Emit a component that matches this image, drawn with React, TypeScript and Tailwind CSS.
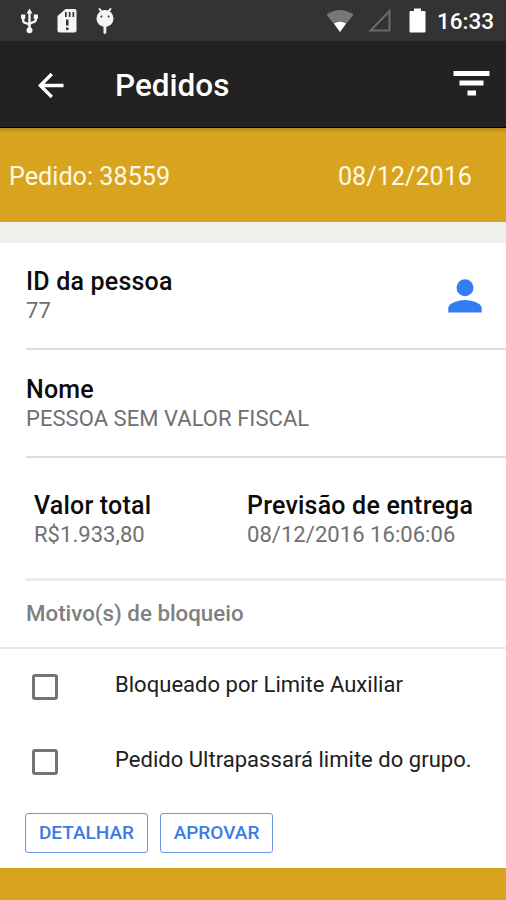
import type { ReactNode } from "react";

function StatusBar() {
  return (
    <div className="flex h-[41px] shrink-0 items-center bg-[#333333] text-white">
      <svg className="ml-5 h-[28px] w-[19px]" viewBox="0 0 19 28" fill="none" stroke="#f5f5f5" strokeWidth="2.4">
        <path d="M9.5 4v18M3.2 10v4c0 2.800 6.3 1.5 6.3 5M15.8 10v3c0 3.200-6.3 1.5-6.3 5" />
        <path d="M9.5 1.5 12.5 6.500h-6zM1 7.500h4.300v4.300H1zM13.700 7.500H18v4.300h-4.300z" fill="#f5f5f5" stroke="none" />
        <circle cx="9.5" cy="23.3" r="3" fill="#f5f5f5" stroke="none" />
      </svg>
      <svg className="ml-[18px] h-[26px] w-[20px]" viewBox="0 0 20 26">
        <path d="M8.500 1H17.500a2 2 0 0 1 2 2V22.500a2 2 0 0 1-2 2H2.500a2 2 0 0 1-2-2V8z" fill="#f5f5f5" />
        <path d="M8 4h1.700v5H8zM11.800 4h1.700v5h-1.700zM15.500 4h1.700v5h-1.700zM9 11.500h2.500v6H9zM9 19.500h2.500v2.500H9z" fill="#333333" />
      </svg>
      <svg className="ml-[18px] h-[28px] w-[20px]" viewBox="0 0 20 28">
        <path d="M4.500 2l3 4M15.500 2l-3 4" stroke="#f5f5f5" strokeWidth="2" strokeLinecap="round" />
        <path d="M8.500 18h2.800v7.500a1.400 1.400 0 0 1-2.800 0z" fill="#f5f5f5" />
        <circle cx="10" cy="11.500" r="8.500" fill="#f5f5f5" />
        <circle cx="6.400" cy="9.500" r="1" fill="#333333" />
        <circle cx="13.600" cy="9.500" r="1" fill="#333333" />
      </svg>
      <svg className="ml-auto h-[24px] w-[28px]" viewBox="0 0 28 24">
        <path d="M.5 5.500Q14-3.500 27.500 5.500L14 23z" fill="#777777" />
        <path d="M8 14.600q6-3.600 12 0L14 23z" fill="#ffffff" />
      </svg>
      <svg className="ml-[14px] h-[24px] w-[23px]" viewBox="0 0 23 24" fill="none" stroke="#6c6c6c" strokeWidth="2">
        <path d="M21.500 2v19.500H2.500z" />
      </svg>
      <svg className="mb-px ml-[18px] h-[25px] w-[17px]" viewBox="0 0 17 25">
        <path d="M5 .5h7V3h3.500q1 0 1 1v19.500q0 1-1 1H1.500q-1 0-1-1V4q0-1 1-1H5z" fill="#ffffff" />
      </svg>
      <span className="mr-3 ml-[11px] pt-px text-[22.5px] leading-[28px] font-medium">16:33</span>
    </div>
  );
}

function AppBar() {
  return (
    <header className="flex h-[87px] shrink-0 items-center border-b border-black bg-[#222222] text-white">
      <svg className="mt-[2px] ml-[37px] h-[28px] w-[28px]" viewBox="0 0 28 28" fill="none" stroke="#ffffff" strokeWidth="3.3">
        <path d="M26.500 14.500H4M14.800 3 3.300 14.500 14.800 26" />
      </svg>
      <h1 className="ml-[50px] pt-[3px] text-[31.500px] leading-[40px] font-medium">Pedidos</h1>
      <svg className="mr-4 mb-0 ml-auto h-[26px] w-[37px]" viewBox="0 0 37 26" fill="#ffffff">
        <path d="M.5 0h36v5H.5zM6.500 9.500h24v5h-24zM14.500 19.500h8.500v5h-8.500z" />
      </svg>
    </header>
  );
}

function Field({ label, value }: { label: string; value: string }) {
  return (
    <div className="whitespace-nowrap">
      <div className="text-[25px] leading-[29px] font-medium tracking-[0.2px] text-[#0c0c0c]">{label}</div>
      <div className="text-[22px] leading-[29px] tracking-[0.05px] text-[#707070]">{value}</div>
    </div>
  );
}

function Reason({ children }: { children: ReactNode }) {
  return (
    <label className="flex h-[75px] items-center whitespace-nowrap">
      <span className="ml-8 size-[26px] rounded-[3px] border-[3px] border-[#747474]" />
      <span className="ml-[57px] pb-[3px] text-[22px] leading-[28px] tracking-[0.030px] text-[#202020]">{children}</span>
    </label>
  );
}

function OutlineButton({ children, className }: { children: ReactNode; className: string }) {
  return (
    <button
      className={
        "h-10 rounded-[3px] border-[1.500px] border-[#6b96ea] text-center text-[19px] font-medium text-[#3b7ce4] " +
        className
      }
    >
      {children}
    </button>
  );
}

export default function App() {
  return (
    <div className="flex h-[900px] w-[506px] flex-col overflow-hidden bg-white font-['Roboto',sans-serif]">
      <StatusBar />
      <AppBar />
      <div className="flex h-[94px] shrink-0 items-center justify-between bg-[#d8a41f] bg-linear-to-b from-[#b58b20] to-[#d8a41f] to-[5px] pt-[4px] pr-[34px] pl-[9px] text-[25.200px] text-[#fff8e4]">
        <span>Pedido: 38559</span>
        <span>08/12/2016</span>
      </div>
      <div className="h-[21px] shrink-0 bg-[#eff1ed]" />
      <main className="flex h-[625px] shrink-0 flex-col">
        <section className="ml-[26px] flex h-[107px] shrink-0 justify-between border-b-2 border-[#dedede] pt-[24px]">
          <Field label="ID da pessoa" value="77" />
          <svg className="mt-[12px] mr-6 h-[34px] w-[34px]" viewBox="0 0 34 34" fill="#347df0">
            <circle cx="17" cy="8.700" r="8.500" />
            <path d="M.3 33.500v-4.300C.3 23.700 11.400 21 17 21s16.700 2.700 16.700 8.200v4.300z" />
          </svg>
        </section>
        <section className="ml-[26px] h-[108px] shrink-0 border-b-2 border-[#dedede] pt-[25px]">
          <Field label="Nome" value="PESSOA SEM VALOR FISCAL" />
        </section>
        <section className="ml-[26px] grid h-[123px] shrink-0 grid-cols-[213px_1fr] border-b-[3px] border-[#ececec] pt-[33px] pl-2">
          <Field label="Valor total" value="R$1.933,80" />
          <Field label="Previsão de entrega" value="08/12/2016 16:06:06" />
        </section>
        <h2 className="h-[68px] shrink-0 border-b-2 border-[#e6e6e6] pt-[18px] pl-[26px] text-[22.300px] leading-[28px] font-medium text-[#808080]">
          Motivo(s) de bloqueio
        </h2>
        <Reason>Bloqueado por Limite Auxiliar</Reason>
        <Reason>Pedido Ultrapassará limite do grupo.</Reason>
        <div className="flex gap-3 pt-[14px] pl-[25px]">
          <OutlineButton className="w-[123px]">DETALHAR</OutlineButton>
          <OutlineButton className="w-[113px]">APROVAR</OutlineButton>
        </div>
      </main>
      <div className="h-8 shrink-0 bg-[#d8a41f]" />
    </div>
  );
}
